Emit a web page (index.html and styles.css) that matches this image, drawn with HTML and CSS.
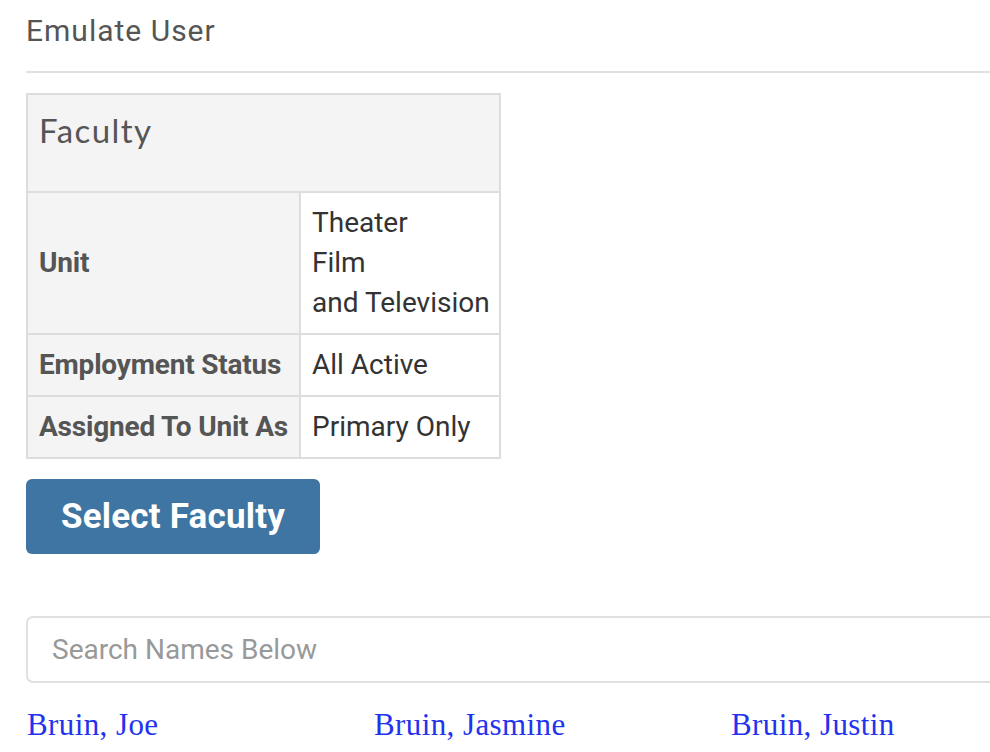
FILE: index.html
```html
<!DOCTYPE html>
<html>
<head>
<meta charset="utf-8">
<link rel="stylesheet" href="styles.css">
</head>
<body>
<div class="page">
  <h1 class="title">Emulate User</h1>
  <hr class="rule">
  <table class="filters">
    <colgroup><col class="col-label"><col class="col-value"></colgroup>
    <tr><th colspan="2" class="head">Faculty</th></tr>
    <tr><th class="label">Unit</th><td class="value">Theater<br>Film<br>and Television</td></tr>
    <tr><th class="label">Employment Status</th><td class="value">All Active</td></tr>
    <tr><th class="label">Assigned To Unit As</th><td class="value">Primary Only</td></tr>
  </table>
  <button class="btn">Select Faculty</button>
  <input class="search" type="text" placeholder="Search Names Below">
  <div class="names">
    <a href="#">Bruin, Joe</a>
    <a href="#">Bruin, Jasmine</a>
    <a href="#">Bruin, Justin</a>
  </div>
</div>
</body>
</html>
```
FILE: styles.css
```css
html, body { margin: 0; padding: 0; background: #fff; overflow: hidden; }
body { font-family: Roboto, "Liberation Sans", sans-serif; color: #333; }
.page { padding-left: 26px; width: 1010px; }
.title {
  margin: 0; padding-top: 13px;
  font-size: 30px; font-weight: 400; color: #555; line-height: 36px; letter-spacing: 1px;
}
.rule { border: 0; border-top: 2px solid #e0e0e0; margin: 22px 0 20px 0; }
.filters {
  border-collapse: collapse; width: 473px; table-layout: fixed;
  font-size: 28px; line-height: 40px;
}
.col-label { width: 273px; }
.col-value { width: 200px; }
.filters th, .filters td {
  border: 2px solid #ddd; padding: 10px 11px; text-align: left; vertical-align: middle;
  white-space: nowrap; overflow: hidden;
}
.head {
  background: #f4f4f4; font-family: Lato, "Open Sans", sans-serif; font-weight: 400;
  font-size: 33px; color: #555; padding: 15px 11px 41px !important; letter-spacing: 1.4px;
}
.label { background: #f4f4f4; color: #555; font-weight: 700; letter-spacing: -0.2px; }
.value { color: #333; font-weight: 400; }
.btn {
  display: block; margin-top: 20px; width: 294px; height: 75px;
  background: #3e75a3; color: #fff; border: 0; border-radius: 6px;
  font-family: Roboto, sans-serif; font-weight: 700; font-size: 35px; letter-spacing: 0.2px;
}
.search {
  display: block; box-sizing: border-box; margin-top: 62px; width: 1000px; height: 67px;
  border: 2px solid #e0e0e0; border-radius: 7px; padding: 0 24px;
  font-family: Roboto, sans-serif; font-size: 28px; color: #333;
}
.search::placeholder { color: #999; }
.names {
  display: grid; grid-template-columns: 347px 357px 1fr;
  margin-top: 22px; padding-left: 1px;
  font-family: "Liberation Serif", serif; font-size: 31px; line-height: 40px;
}
.names a { color: #2233ee; text-decoration: none; letter-spacing: 0.4px; }
```
